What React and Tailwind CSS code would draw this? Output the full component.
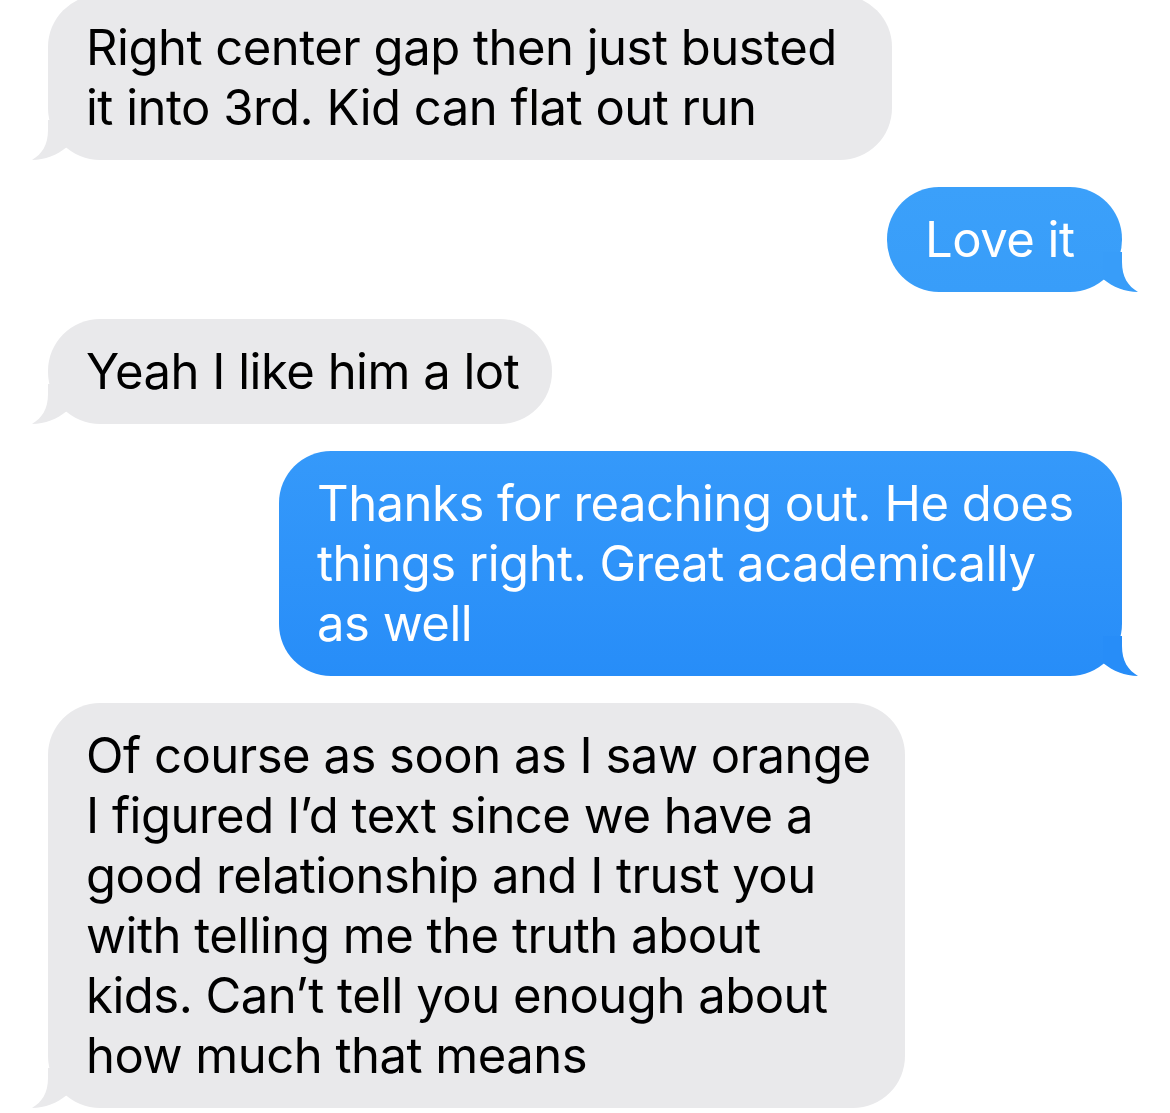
import React from 'react';

const font = { fontFamily: 'Inter, "Noto Sans", sans-serif' };

const Tail = ({ side, color }) => {
  if (side === 'left') {
    return (
      <svg
        className="absolute bottom-0 left-[-16px]"
        width="36"
        height="40"
        viewBox="0 0 36 40"
      >
        <path d="M16 0 L16 10 C16 25 10 34 0 40 C13 40 25 35 35 27 L35 0 Z" fill={color} />
      </svg>
    );
  }
  return (
    <svg
      className="absolute bottom-0 right-[-16px]"
      width="36"
      height="40"
      viewBox="0 0 36 40"
    >
      <path d="M20 0 L20 10 C20 25 26 34 36 40 C23 40 11 35 1 27 L1 0 Z" fill={color} />
    </svg>
  );
};

const Received = ({ width, lines }) => (
  <div className="flex justify-start pl-[48px]">
    <div
      className={`relative rounded-[52px] bg-[#e9e9eb] py-[22.5px] pl-[38px] text-[49px] leading-[60px] tracking-[-0.5px] text-black ${width}`}
    >
      {lines.map((l, i) => (
        <div key={i} className="whitespace-nowrap">{l}</div>
      ))}
      <Tail side="left" color="#e9e9eb" />
    </div>
  </div>
);

const Sent = ({ width, lines, bg, tail }) => (
  <div className="flex justify-end pr-[48px]">
    <div
      className={`relative rounded-[52px] py-[22.5px] pl-[38px] text-[49px] leading-[60px] tracking-[-0.5px] text-white ${bg} ${width}`}
    >
      {lines.map((l, i) => (
        <div key={i} className="whitespace-nowrap">{l}</div>
      ))}
      <Tail side="right" color={tail} />
    </div>
  </div>
);

export default function App() {
  return (
    <div className="min-h-screen w-[1170px] overflow-hidden bg-white" style={font}>
      <div className="mt-[-5px] flex flex-col gap-[27px]">
        <Received
          width="w-[844px]"
          lines={['Right center gap then just busted', 'it into 3rd. Kid can flat out run']}
        />
        <Sent
          width="w-[235px]"
          lines={['Love it']}
          bg="bg-gradient-to-b from-[#3ba0fa] to-[#389df9]"
          tail="#389df9"
        />
        <Received width="w-[504px]" lines={['Yeah I like him a lot']} />
        <Sent
          width="w-[843px]"
          lines={[
            'Thanks for reaching out. He does',
            'things right. Great academically',
            'as well',
          ]}
          bg="bg-gradient-to-b from-[#3599fa] to-[#278df8]"
          tail="#278df8"
        />
        <Received
          width="w-[857px]"
          lines={[
            'Of course as soon as I saw orange',
            'I figured I\u2019d text since we have a',
            'good relationship and I trust you',
            'with telling me the truth about',
            'kids. Can\u2019t tell you enough about',
            'how much that means',
          ]}
        />
      </div>
    </div>
  );
}
